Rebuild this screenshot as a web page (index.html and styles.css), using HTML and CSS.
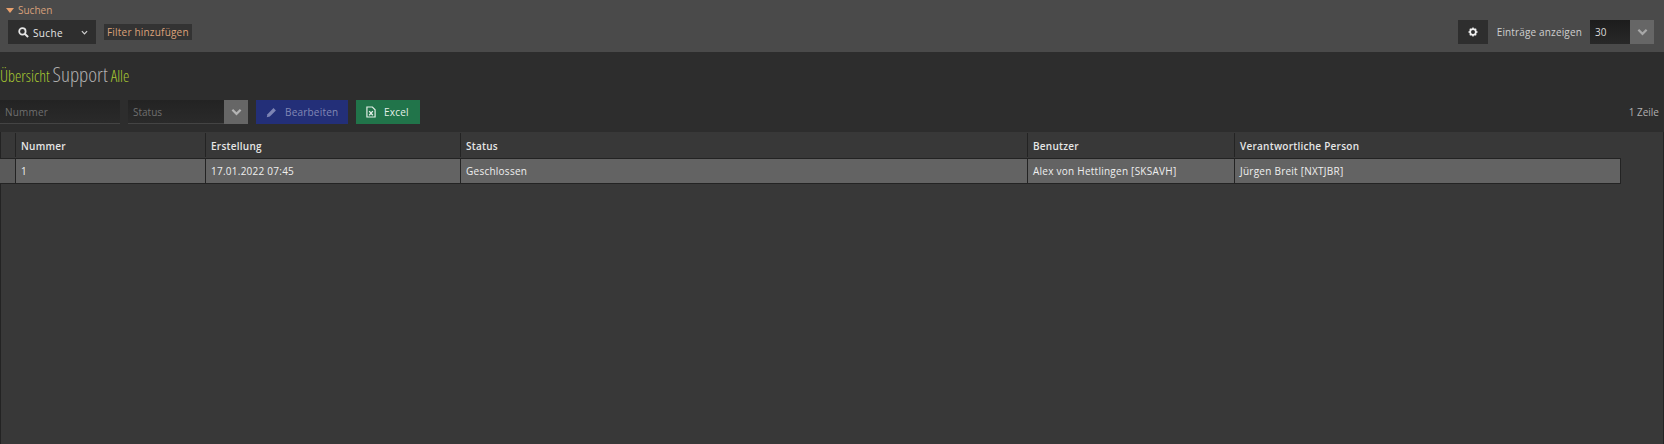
FILE: index.html
```html
<!DOCTYPE html>
<html lang="de">
<head>
  <meta charset="UTF-8" />
  <title>Übersicht Support Alle</title>
  <link rel="stylesheet" href="styles.css">
</head>
<body>
  <div class="searchbar">
    <div class="search-left">
      <div class="search-title"><span class="caret"></span>Suchen</div>
      <div class="search-row">
        <div class="search-btn">
          <svg class="icon-search" viewBox="0 0 12 12" width="11" height="11"><circle cx="4.8" cy="4.8" r="3.5" fill="none" stroke="#e6e6e6" stroke-width="1.9"/><path d="M7.5 7.5L11 11" stroke="#e6e6e6" stroke-width="2.2"/></svg>
          <span>Suche</span>
          <svg class="icon-chev-small" viewBox="0 0 8 5" width="7" height="5"><path d="M1 1l3 3 3-3" fill="none" stroke="#cfcfcf" stroke-width="1.4"/></svg>
        </div>
        <span class="filter-add">Filter hinzufügen</span>
      </div>
    </div>
    <div class="search-right">
      <div class="gear-btn">
        <svg viewBox="0 0 12 12" width="10" height="10"><circle cx="6" cy="6" r="3.4" fill="none" stroke="#f0f0f0" stroke-width="2"/><path d="M6 .6v2M6 9.4v2M.6 6h2M9.4 6h2M2.2 2.2l1.4 1.4M8.4 8.4l1.4 1.4M2.2 9.8l1.4-1.4M8.4 3.6l1.4-1.4" stroke="#f0f0f0" stroke-width="1.7"/></svg>
      </div>
      <span class="entries-label">Einträge anzeigen</span>
      <div class="select select-entries">
        <span class="select-value">30</span>
        <span class="select-arrow"><svg viewBox="0 0 12 8" width="11" height="8"><path d="M1.5 1.5L6 6l4.500-4.500" fill="none" stroke="#a8a8a8" stroke-width="2.400"/></svg></span>
      </div>
    </div>
  </div>

  <h1 class="page-title">Übersicht <span class="title-main">Support</span> Alle</h1>

  <div class="toolbar">
    <div class="input-nummer">Nummer</div>
    <div class="select select-status">
      <span class="select-value">Status</span>
      <span class="select-arrow"><svg viewBox="0 0 12 8" width="11" height="8"><path d="M1.5 1.5L6 6l4.500-4.500" fill="none" stroke="#b4b4b4" stroke-width="2.400"/></svg></span>
    </div>
    <div class="btn btn-edit">
      <svg viewBox="0 0 12 12" width="11" height="11"><path d="M.8 11.200l.8-3.400L8.200 1.200l2.600 2.600-6.600 6.600z" fill="#7d84b4"/></svg>
      Bearbeiten
    </div>
    <div class="btn btn-excel">
      <svg viewBox="0 0 11 13" width="10" height="12"><path d="M1 1h6l3 3v8H1z" fill="none" stroke="#e4efe8" stroke-width="1.300"/><path d="M3.500 5.500l4 4.500M7.500 5.500l-4 4.500" stroke="#e4efe8" stroke-width="1.500"/></svg>
      Excel
    </div>
    <span class="row-count">1 Zeile</span>
  </div>

  <div class="grid-panel">
    <table class="grid">
      <colgroup>
        <col class="col-marker">
        <col class="col-nummer">
        <col class="col-erstellung">
        <col class="col-status">
        <col class="col-benutzer">
        <col class="col-person">
      </colgroup>
      <thead>
        <tr>
          <th></th>
          <th>Nummer</th>
          <th>Erstellung</th>
          <th>Status</th>
          <th>Benutzer</th>
          <th>Verantwortliche Person</th>
        </tr>
      </thead>
      <tbody>
        <tr>
          <td></td>
          <td>1</td>
          <td>17.01.2022 07:45</td>
          <td>Geschlossen</td>
          <td>Alex von Hettlingen [SKSAVH]</td>
          <td>Jürgen Breit [NXTJBR]</td>
        </tr>
      </tbody>
    </table>
  </div>
</body>
</html>
```

FILE: styles.css
```css
* {
  box-sizing: border-box;
  margin: 0;
  padding: 0;
}

html, body {
  height: 100%;
  overflow: hidden;
}

body {
  display: flex;
  flex-direction: column;
  font-family: "Open Sans", "Noto Sans", sans-serif;
  font-size: 10px;
  background-color: #2d2d2d;
  color: #e6e6e6;
}

/* search bar */
.searchbar {
  display: flex;
  justify-content: space-between;
  align-items: flex-end;
  height: 52px;
  padding: 0 10px 8px 6px;
  background-color: #4a4a4a;
}

.search-title {
  display: flex;
  align-items: center;
  gap: 4px;
  height: 12px;
  margin-bottom: 4px;
  color: #d8a07a;
}

.caret {
  width: 0;
  height: 0;
  border-left: 4px solid transparent;
  border-right: 4px solid transparent;
  border-top: 5px solid #e8a06c;
}

.search-row {
  display: flex;
  align-items: center;
  gap: 8px;
  margin-left: 2px;
}

.search-btn {
  display: flex;
  align-items: center;
  width: 88px;
  height: 24px;
  padding-left: 10px;
  background-color: #2e2e2e;
  letter-spacing: .35px;
}

.search-btn span {
  margin-left: 4px;
  padding-top: 1px;
}

.icon-chev-small {
  margin-left: 18px;
}

.filter-add {
  height: 16px;
  padding: 0 3px;
  line-height: 17px;
  background-color: #333;
  color: #dca27a;
  letter-spacing: .2px;
}

.search-right {
  display: flex;
  align-items: center;
}

.gear-btn {
  display: flex;
  align-items: center;
  justify-content: center;
  width: 30px;
  height: 24px;
  background-color: #2e2e2e;
}

.entries-label {
  margin: 0 8px 0 9px;
  color: #cfcfcf;
  letter-spacing: .15px;
}

.select {
  display: flex;
  height: 24px;
}

.select-value {
  flex: 1;
  padding-left: 5px;
  line-height: 25px;
  background: linear-gradient(#1c1c1c, #282828);
}

.select-arrow {
  display: flex;
  align-items: center;
  justify-content: center;
  width: 24px;
  background-color: #666;
}

.select-entries {
  width: 64px;
}

.select-entries .select-value {
  color: #dcdcdc;
}

/* title */
.page-title {
  height: 44px;
  padding-top: 10px;
  font-family: "Open Sans", sans-serif;
  font-stretch: 75%;
  font-size: 16px;
  font-weight: 300;
  line-height: 24px;
  color: #a8c832;
  white-space: nowrap;
}

.title-main {
  font-size: 21px;
  color: #b0b0b0;
}

/* toolbar */
.toolbar {
  display: flex;
  align-items: flex-start;
  height: 36px;
  padding-top: 4px;
}

.input-nummer {
  width: 120px;
  height: 24px;
  padding-left: 5px;
  line-height: 25px;
  background: linear-gradient(#232323, #2a2a2a);
  border-bottom: 1px solid #444;
  color: #6f6f6f;
  letter-spacing: .2px;
}

.select-status {
  width: 120px;
  margin-left: 8px;
  color: #6f6f6f;
}

.select-status .select-value {
  background: linear-gradient(#232323, #2a2a2a);
  border-bottom: 1px solid #444;
}

.btn {
  display: flex;
  align-items: center;
  gap: 8px;
  height: 24px;
  margin-left: 8px;
  padding-left: 10px;
  letter-spacing: .2px;
}

.btn-edit {
  width: 92px;
  background-color: #232f78;
  color: #8288b5;
}

.btn-excel {
  width: 64px;
  background-color: #21744a;
  color: #e4efe8;
}

.row-count {
  margin-left: auto;
  padding-right: 5px;
  line-height: 24px;
  color: #b0b0b0;
}

/* grid */
.grid-panel {
  flex: 1;
  background-color: #383838;
  border-right: 1px solid #232323;
  border-left: 1px solid #232323;
}

.grid {
  width: 1621px;
  margin-left: -1px;
  border-collapse: separate;
  border-spacing: 0;
  table-layout: fixed;
  white-space: nowrap;
}

.col-marker { width: 16px; }
.col-nummer { width: 190px; }
.col-erstellung { width: 255px; }
.col-status { width: 567px; }
.col-benutzer { width: 207px; }
.col-person { width: 386px; }

.grid th {
  position: relative;
  height: 27px;
  padding: 2px 0 0 5px;
  border-bottom: 1px solid #232323;
  font-weight: 600;
  letter-spacing: .25px;
  text-align: left;
  color: #e6e6e6;
}

.grid th:not(:last-child)::after {
  content: "";
  position: absolute;
  top: 1px;
  right: 0;
  bottom: 1px;
  width: 1px;
  background-color: #232323;
}

.grid td {
  height: 25px;
  padding: 0 0 0 5px;
  border-right: 1px solid #232323;
  border-bottom: 1px solid #232323;
  background-color: #636363;
  color: #efefef;
  letter-spacing: .25px;
}

.grid td:first-child {
  background-color: #5a5a5a;
}
```
